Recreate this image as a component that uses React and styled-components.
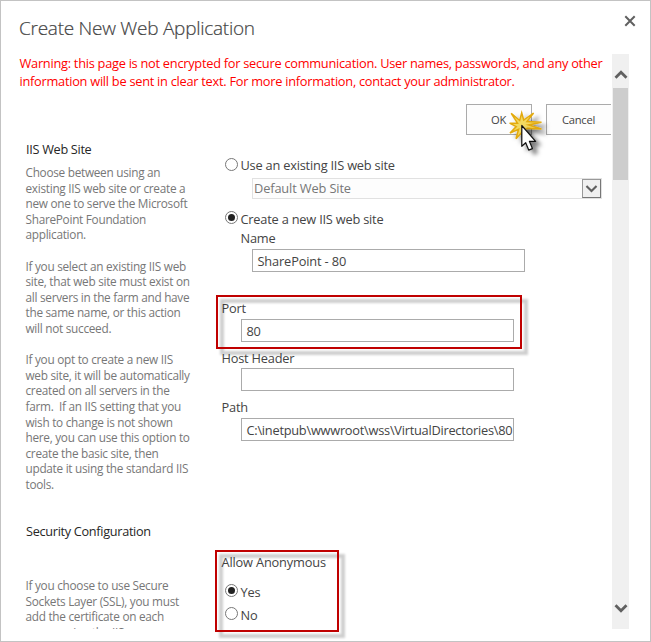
import React from "react";
import styled, { createGlobalStyle } from "styled-components";

const GlobalStyle = createGlobalStyle`
  *, *::before, *::after { box-sizing: border-box; }
  body {
    margin: 0;
    background: #fff;
    font-family: "Open Sans", "Noto Sans", sans-serif;
  }
`;

const Dialog = styled.main`
  position: relative;
  display: flex;
  flex-direction: column;
  width: 651px;
  height: 642px;
  border: 1px solid #c3c3c3;
  background: #fff;
  overflow: hidden;
`;

const Header = styled.header`
  display: flex;
  justify-content: space-between;
  height: 53px;
  padding: 13px 14px 0 18px;
`;

const Title = styled.h1`
  margin: 0;
  font-size: 19px;
  line-height: 28px;
  font-weight: 300;
  letter-spacing: -0.26px;
  color: #444;
  -webkit-text-stroke: 0.2px #444;
`;

const CloseButton = styled.button`
  display: flex;
  align-self: flex-start;
  margin-top: 1px;
  padding: 0;
  border: 0;
  background: none;
`;

const Body = styled.div`
  display: flex;
  height: 575px;
  padding-left: 18px;
`;

const Content = styled.div`
  width: 592px;
  height: 575px;
  margin-right: 1px;
  overflow: hidden;
`;

const Warning = styled.div`
  padding-left: 0.5px;
  font-size: 12.8px;
  line-height: 18px;
  letter-spacing: -0.265px;
  color: #f00;
  white-space: nowrap;
`;

const Actions = styled.div`
  display: flex;
  gap: 14px;
  margin-top: 14px;
  padding-left: 447px;
`;

const ActionButton = styled.button`
  flex: none;
  width: 66px;
  height: 31px;
  padding: 0 1px 0 0;
  border: 1px solid #ababab;
  background: #fdfdfd;
  color: #444;
  font: 11.2px/29px "Open Sans", sans-serif;
  letter-spacing: -0.27px;
`;

const Section = styled.section`
  display: grid;
  grid-template-columns: 202px 390px;
`;

const SiteSection = styled(Section)`
  height: 386px;
`;

const Summary = styled.div`
  padding: ${(p) => p.$top}px 0 0 6.5px;
`;

const SectionTitle = styled.h2`
  margin: 0 0 ${(p) => p.$after}px;
  padding-left: 0.5px;
  font-size: 12.7px;
  line-height: 18px;
  font-weight: 400;
  letter-spacing: -0.3px;
  color: #262626;
`;

const Description = styled.p`
  margin: 0 0 15.6px;
  font-size: 11.8px;
  line-height: 15.6px;
  letter-spacing: -0.28px;
  color: #777;
  white-space: pre;
`;

const Fields = styled.div`
  padding-top: ${(p) => p.$top}px;
`;

const Option = styled.div`
  display: flex;
  align-items: center;
  height: ${(p) => p.$height}px;
  padding-left: 4px;
  gap: 2.5px;
`;

const Radio = styled.span`
  flex: none;
  display: grid;
  place-items: center;
  width: 13px;
  height: 13px;
  margin-top: -3px;
  border: 1px solid #777;
  border-radius: 50%;

  &::after {
    content: "";
    width: 7px;
    height: 7px;
    border-radius: 50%;
    background: ${(p) => (p.$checked ? "#222" : "transparent")};
  }
`;

const Label = styled.div`
  height: 18px;
  margin-top: ${(p) => (p.$raised ? -2 : 0)}px;
  margin-left: ${(p) => p.$indent || 0}px;
  font-size: 12.8px;
  line-height: 18px;
  letter-spacing: ${(p) => p.$spacing || "-0.21px"};
  color: #444;
  white-space: nowrap;
`;

const PlainLabel = styled(Label)`
  padding-left: 0.5px;
`;

const Select = styled.div`
  display: flex;
  justify-content: space-between;
  width: 350px;
  height: 21px;
  margin: 3px 0 10px 31px;
  padding-left: 1px;
  border: 1px solid #e1e1e1;
  background: #fdfdfd;
  color: #777;
  font-size: 12.8px;
  line-height: 19px;
  letter-spacing: -0.13px;
`;

const SelectArrow = styled.span`
  display: grid;
  place-items: center;
  width: 19px;
  height: 19px;
  border: 1px solid #777;
  border-top-color: #999;
  border-left-color: #999;
  background: #f0f0f0;
`;

const TextBox = styled.div`
  width: 273px;
  height: 23px;
  margin: ${(p) => p.$top}px 0 ${(p) => p.$bottom}px ${(p) => p.$indent}px;
  padding: 1px 0 0 4.5px;
  border: 1px solid #ababab;
  background: #fff;
  color: #444;
  font-size: 12.8px;
  line-height: 21px;
  letter-spacing: ${(p) => p.$spacing || "-0.25px"};
  white-space: nowrap;
  overflow: hidden;
`;

const Scrollbar = styled.div`
  display: flex;
  flex-direction: column;
  align-items: center;
  width: 17px;
  height: 575px;
  background: #f0f0f0;
`;

const ScrollButton = styled.div`
  display: grid;
  place-items: center;
  width: 17px;
  height: ${(p) => p.$height}px;
  padding-top: 7px;
`;

const ScrollTrack = styled.div`
  flex: 1;
  width: 15px;
`;

const ScrollThumb = styled.div`
  height: 92px;
  background: #cdcdcd;
`;

const CalloutShadow = styled.div`
  position: absolute;
  left: ${(p) => p.$x + 4}px;
  top: ${(p) => p.$y + 4}px;
  width: ${(p) => p.$w + 2}px;
  height: ${(p) => p.$h + 2}px;
  border: 4px solid rgba(0, 0, 0, 0.19);
  filter: blur(1.2px);
  pointer-events: none;
`;

const CalloutFrame = styled.div`
  position: absolute;
  left: ${(p) => p.$x}px;
  top: ${(p) => p.$y}px;
  width: ${(p) => p.$w}px;
  height: ${(p) => p.$h}px;
  border: 2px solid #c00000;
  pointer-events: none;
`;

const Callout = ({ x, y, w, h }) => (
  <>
    <CalloutShadow $x={x} $y={y} $w={w} $h={h} />
    <CalloutFrame $x={x} $y={y} $w={w} $h={h} />
  </>
);

const Pointer = styled.svg`
  position: absolute;
  left: 504px;
  top: 104px;
  overflow: visible;
  pointer-events: none;
`;

const Chevron = ({ up, small }) => (
  <svg width={small ? 13 : 14} height={small ? 11 : 12} viewBox="0 0 14 12">
    <path
      d={up ? "M1.5 8.8 7 3.3l5.5 5.5" : "M1.5 3.3 7 8.8l5.5-5.5"}
      fill="none"
      stroke="#606060"
      strokeWidth={small ? 2.3 : 2.8}
    />
  </svg>
);

const siteDescriptions = [
  "Choose between using an\nexisting IIS web site or create a\nnew one to serve the Microsoft\nSharePoint Foundation\napplication.",
  "If you select an existing IIS web\nsite, that web site must exist on\nall servers in the farm and have\nthe same name, or this action\nwill not succeed.",
  "If you opt to create a new IIS\nweb site, it will be automatically\ncreated on all servers in the\nfarm.  If an IIS setting that you\nwish to change is not shown\nhere, you can use this option to\ncreate the basic site, then\nupdate it using the standard IIS\ntools.",
];

const securityDescription =
  "If you choose to use Secure\nSockets Layer (SSL), you must\nadd the certificate on each\nserver using the IIS";

export default function App() {
  return (
    <Dialog>
      <GlobalStyle />
      <Header>
        <Title>Create New Web Application</Title>
        <CloseButton aria-label="Close">
          <svg width="12" height="12" viewBox="0 0 12 12">
            <path d="M1.3 1.3 10.7 10.7M10.7 1.3 1.3 10.7" stroke="#606060" strokeWidth="2" />
          </svg>
        </CloseButton>
      </Header>
      <Body>
        <Content>
          <Warning>
            Warning: this page is not encrypted for secure communication. User names, passwords, and any other
            <br />
            information will be sent in clear text. For more information, contact your administrator.
          </Warning>
          <Actions>
            <ActionButton>OK</ActionButton>
            <ActionButton>Cancel</ActionButton>
          </Actions>
          <SiteSection>
            <Summary $top={5}>
              <SectionTitle $after={7}>IIS Web Site</SectionTitle>
              {siteDescriptions.map((text) => (
                <Description key={text}>{text}</Description>
              ))}
            </Summary>
            <Fields $top={21}>
              <Option $height={19}>
                <Radio />
                <Label $raised>Use an existing IIS web site</Label>
              </Option>
              <Select>
                Default Web Site
                <SelectArrow>
                  <Chevron small />
                </SelectArrow>
              </Select>
              <Option $height={20}>
                <Radio $checked />
                <Label>Create a new IIS web site</Label>
              </Option>
              <PlainLabel $indent={19}>Name</PlainLabel>
              <TextBox $top={2} $bottom={27} $indent={31} $spacing="-0.15px">SharePoint - 80</TextBox>
              <PlainLabel>Port</PlainLabel>
              <TextBox $top={2} $bottom={7} $indent={20}>80</TextBox>
              <PlainLabel>Host Header</PlainLabel>
              <TextBox $top={1} $bottom={7} $indent={20} />
              <PlainLabel>Path</PlainLabel>
              <TextBox $top={2} $bottom={0} $indent={20}>
                C:\inetpub\wwwroot\wss\VirtualDirectories\80
              </TextBox>
            </Fields>
          </SiteSection>
          <Section>
            <Summary $top={1}>
              <SectionTitle $after={38}>Security Configuration</SectionTitle>
              <Description>{securityDescription}</Description>
            </Summary>
            <Fields $top={32}>
              <PlainLabel $spacing="-0.17px">Allow Anonymous</PlainLabel>
              <Option $height={42}>
                <Radio $checked />
                <Label>Yes</Label>
              </Option>
              <Option $height={4}>
                <Radio />
                <Label>No</Label>
              </Option>
            </Fields>
          </Section>
        </Content>
        <Scrollbar>
          <ScrollButton $height={34}>
            <Chevron up />
          </ScrollButton>
          <ScrollTrack>
            <ScrollThumb />
          </ScrollTrack>
          <ScrollButton $height={50}>
            <Chevron />
          </ScrollButton>
        </Scrollbar>
      </Body>
      <Callout x={215} y={294} w={306} h={54} />
      <Callout x={214} y={549} w={124} h={82} />
      <Pointer width="44" height="50" viewBox="505 105 44 50">
        <defs>
          <filter id="cursor-shadow" x="-50%" y="-50%" width="220%" height="220%">
            <feDropShadow dx="5" dy="4" stdDeviation="2" floodColor="#000" floodOpacity="0.5" />
          </filter>
        </defs>
        <path
          d="M511.2 113.3 519.7 120.5 521.7 112.8 523.7 120 533.6 113 527 121.6 541.5 122.2 528.4 125 541.5 129 527.5 128.2 523 131 516 138.8 518.6 129.3 510 133 516.2 126.6 509.6 123.2 517.5 123.2z"
          fill="#f3da61"
          stroke="#e3aa10"
          strokeWidth="1.5"
          filter="url(#cursor-shadow)"
        />
        <path
          d="M521.8 125.5v20.8l3.9-3.6 3 7.4 3.7-1.5-3-7.3h6.2z"
          fill="#fff"
          stroke="#111"
          strokeWidth="1.2"
          strokeLinejoin="round"
          filter="url(#cursor-shadow)"
        />
      </Pointer>
    </Dialog>
  );
}
